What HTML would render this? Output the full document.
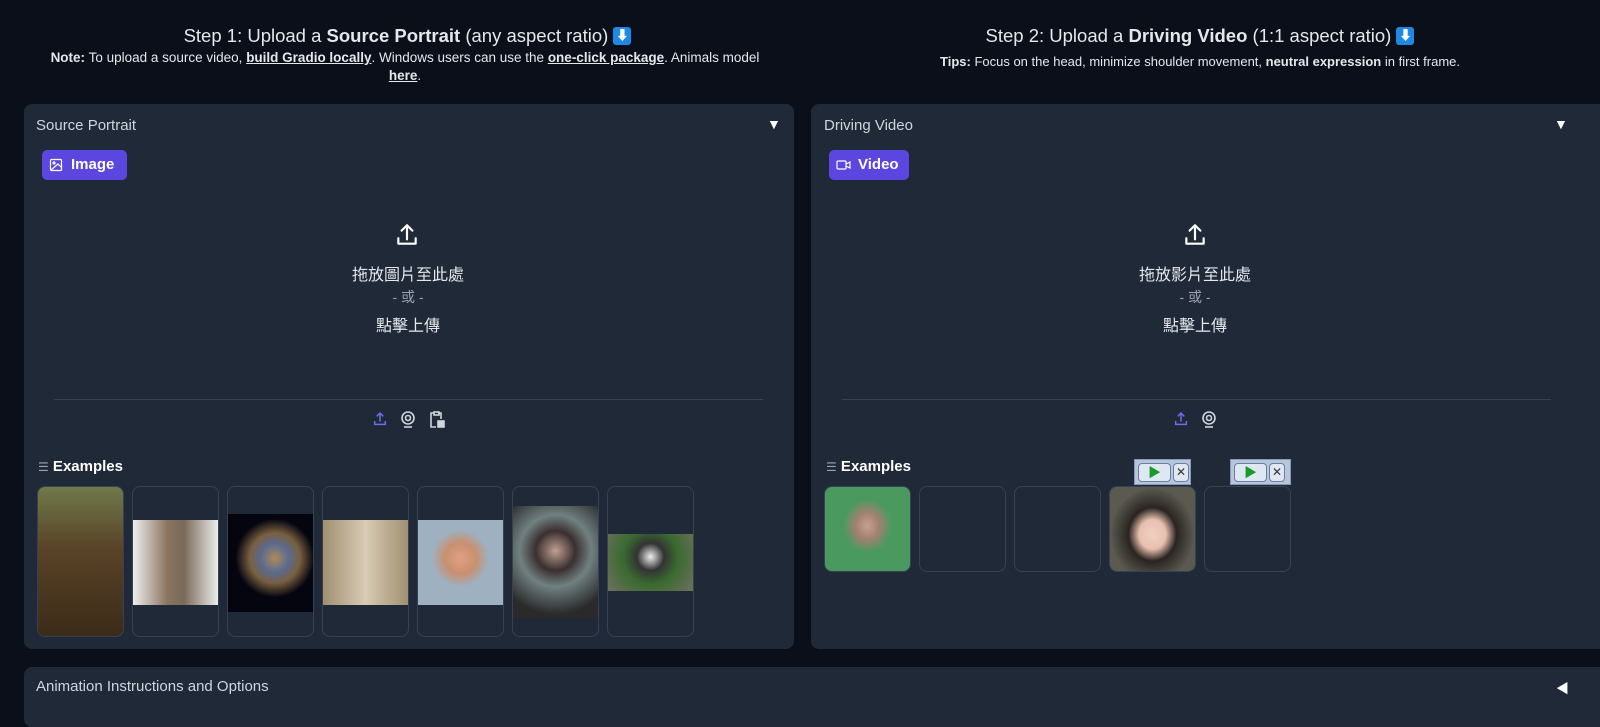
<!DOCTYPE html><html><head><meta charset="utf-8"><style>
*{box-sizing:border-box;margin:0;padding:0}
body{width:1600px;height:712px;background:#0b0f19;color:#e5e7eb;font-family:"Liberation Sans","Noto Sans CJK TC",sans-serif;position:relative;overflow:hidden}
.a{position:absolute}
.t{text-align:center;color:#e5e7eb}
.panel{position:absolute;background:#1f2937;border-radius:8px}
.lbl{position:absolute;font-size:15px;color:#d1d5db}
.tab{position:absolute;background:#5b47e0;border-radius:5px;color:#fff;font-weight:bold;font-size:15px;height:30px;line-height:30px;padding-left:29px}
.cell{position:absolute;border:1px solid #374151;border-radius:8px;overflow:hidden;width:87px}
.cell div{position:absolute;left:0;width:100%}
.cn{font-size:16px;color:#e5e7eb;text-align:center;width:200px}
.pb{position:absolute;background:#b8c6dc;border:1px solid #8899b8;height:26px}
.pb span{position:absolute;top:3px;height:19px;border:1px solid #6a7ea0;border-radius:4px;background:#dfe7f3}
</style></head><body>
<div class="a t" style="left:0;top:25px;width:815px;font-size:18.5px">Step 1: Upload a <b>Source Portrait</b> (any aspect ratio) <span style="display:inline-block;width:18px;height:18px;background:#1e88e5;border-radius:3px;color:#fff;font-size:13px;line-height:18px;vertical-align:2px">⬇</span></div>
<div class="a t" style="left:40px;top:49px;width:730px;font-size:13.5px;line-height:18px"><b>Note:</b> To upload a source video, <b><u>build Gradio locally</u></b>. Windows users can use the <b><u>one-click package</u></b>. Animals model <b><u>here</u></b>.</div>
<div class="a t" style="left:800px;top:25px;width:800px;font-size:18.5px">Step 2: Upload a <b>Driving Video</b> (1:1 aspect ratio) <span style="display:inline-block;width:18px;height:18px;background:#1e88e5;border-radius:3px;color:#fff;font-size:13px;line-height:18px;vertical-align:2px">⬇</span></div>
<div class="a t" style="left:800px;top:54px;width:800px;font-size:13px"><b>Tips:</b> Focus on the head, minimize shoulder movement, <b>neutral expression</b> in first frame.</div>

<div class="panel" style="left:24px;top:104px;width:770px;height:545px"></div>
<div class="panel" style="left:811px;top:104px;width:800px;height:545px"></div>
<div class="panel" style="left:24px;top:667px;width:1590px;height:60px"></div>

<div class="lbl" style="left:36px;top:117px">Source Portrait</div>
<div class="a" style="left:767px;top:116px;font-size:14px;color:#fff">▼</div>
<div class="lbl" style="left:824px;top:117px">Driving Video</div>
<div class="a" style="left:1554px;top:116px;font-size:14px;color:#fff">▼</div>
<div class="lbl" style="left:36px;top:678px">Animation Instructions and Options</div>
<div class="a" style="left:1556px;top:678px;font-size:13px;color:#fff">◀</div>

<div class="tab" style="left:42px;top:150px;width:85px">Image</div>
<svg class="a" style="left:49px;top:158px" width="14" height="14" viewBox="0 0 14 14" fill="none" stroke="#fff" stroke-width="1.2"><rect x="1.5" y="1.5" width="11" height="11" rx="1"/><circle cx="5" cy="5" r="1"/><path d="M12 9 9 6 2 12"/></svg>
<div class="tab" style="left:829px;top:150px;width:80px">Video</div>
<svg class="a" style="left:836px;top:159px" width="15" height="12" viewBox="0 0 15 12" fill="none" stroke="#fff" stroke-width="1.2"><rect x="1" y="2" width="9" height="8" rx="1"/><path d="M10 5l4-2v6l-4-2"/></svg>

<svg class="a" style="left:394px;top:222px" width="26" height="26" viewBox="0 0 24 24" fill="none" stroke="#fff" stroke-width="2" stroke-linecap="round" stroke-linejoin="round"><path d="M4 15v5h16v-5M12 16V3M7 8l5-5 5 5"/></svg>
<svg class="a" style="left:1182px;top:222px" width="26" height="26" viewBox="0 0 24 24" fill="none" stroke="#fff" stroke-width="2" stroke-linecap="round" stroke-linejoin="round"><path d="M4 15v5h16v-5M12 16V3M7 8l5-5 5 5"/></svg>
<div class="a cn" style="left:308px;top:261px">拖放圖片至此處</div>
<div class="a cn" style="left:308px;top:287px;font-size:14px;color:#9ca3af">- 或 -</div>
<div class="a cn" style="left:308px;top:312px">點擊上傳</div>
<div class="a cn" style="left:1095px;top:261px">拖放影片至此處</div>
<div class="a cn" style="left:1095px;top:287px;font-size:14px;color:#9ca3af">- 或 -</div>
<div class="a cn" style="left:1095px;top:312px">點擊上傳</div>

<div class="a" style="left:54px;top:399px;width:709px;height:1px;background:#374151"></div>
<div class="a" style="left:842px;top:399px;width:709px;height:1px;background:#374151"></div>
<svg class="a" style="left:372px;top:411px" width="16" height="16" viewBox="0 0 24 24" fill="none" stroke="#6d6ff0" stroke-width="2.2"><path d="M4 15v5h16v-5M12 16V3M7 8l5-5 5 5"/></svg>
<svg class="a" style="left:400px;top:411px" width="16" height="17" viewBox="0 0 16 17" fill="none" stroke="#d1d5db" stroke-width="1.6"><circle cx="8" cy="7" r="6"/><circle cx="8" cy="7" r="2.5"/><path d="M4 16h8"/></svg>
<svg class="a" style="left:429px;top:411px" width="16" height="17" viewBox="0 0 16 17" fill="none" stroke="#d1d5db" stroke-width="1.6"><path d="M5 2H2v14h5M9 2h3v6"/><rect x="5" y="1" width="5" height="3"/><rect x="9" y="10" width="6" height="6" fill="#d1d5db"/></svg>
<svg class="a" style="left:1173px;top:411px" width="16" height="16" viewBox="0 0 24 24" fill="none" stroke="#6d6ff0" stroke-width="2.2"><path d="M4 15v5h16v-5M12 16V3M7 8l5-5 5 5"/></svg>
<svg class="a" style="left:1201px;top:411px" width="16" height="17" viewBox="0 0 16 17" fill="none" stroke="#d1d5db" stroke-width="1.6"><circle cx="8" cy="7" r="6"/><circle cx="8" cy="7" r="2.5"/><path d="M4 16h8"/></svg>

<div class="a" style="left:38px;top:458px;font-size:15px;font-weight:bold;color:#fff"><span style="font-size:12px;font-weight:normal;color:#9ca3af">☰</span> Examples</div>
<div class="a" style="left:826px;top:458px;font-size:15px;font-weight:bold;color:#fff"><span style="font-size:12px;font-weight:normal;color:#9ca3af">☰</span> Examples</div>

<div class="cell" style="left:37px;top:486px;height:151px"><div style="top:0;height:151px;background:linear-gradient(#6f7a4a,#5a4428 40%,#3a2a18)"></div></div>
<div class="cell" style="left:132px;top:486px;height:151px"><div style="top:33px;height:85px;background:linear-gradient(90deg,#eee,#8a7560 40%,#7a6a5a 60%,#eee)"></div></div>
<div class="cell" style="left:227px;top:486px;height:151px"><div style="top:27px;height:98px;background:radial-gradient(circle at 55% 45%,#b08a5a 0,#5a6a90 20%,#7a6040 35%,#050510 55%)"></div></div>
<div class="cell" style="left:322px;top:486px;height:151px"><div style="top:33px;height:85px;background:linear-gradient(90deg,#a09070,#d8cbb5 50%,#a09070)"></div></div>
<div class="cell" style="left:417px;top:486px;height:151px"><div style="top:33px;height:85px;background:radial-gradient(circle at 50% 45%,#e0a080 0,#c89070 25%,#9fb0c0 45%)"></div></div>
<div class="cell" style="left:512px;top:486px;height:151px"><div style="top:19px;height:112px;background:radial-gradient(circle at 50% 40%,#c0a090 0,#3a3030 25%,#708080 45%,#2a2a2a 80%)"></div></div>
<div class="cell" style="left:607px;top:486px;height:151px"><div style="top:47px;height:57px;background:radial-gradient(circle at 50% 40%,#eee 0,#333 25%,#3a6a30 50%,#707060)"></div></div>

<div class="cell" style="left:824px;top:486px;height:86px"><div style="top:0;height:86px;background:radial-gradient(ellipse at 50% 45%,#c8a090 0,#a08070 20%,#4a9a60 40%)"></div></div>
<div class="cell" style="left:919px;top:486px;height:86px"></div>
<div class="cell" style="left:1014px;top:486px;height:86px"></div>
<div class="cell" style="left:1109px;top:486px;height:86px"><div style="top:0;height:86px;background:radial-gradient(ellipse at 50% 55%,#f0d0c0 0,#e8c0b0 22%,#2a2420 40%,#5a5a50 70%)"></div></div>
<div class="cell" style="left:1204px;top:486px;height:86px"></div>
<div class="pb" style="left:1134px;top:459px;width:57px"><span style="left:3px;width:33px;color:#1a9a2a;font-size:13px;line-height:17px;text-align:center">▶</span><span style="left:38px;width:16px;font-size:12px;line-height:17px;text-align:center;color:#333">✕</span></div>
<div class="pb" style="left:1230px;top:459px;width:61px"><span style="left:3px;width:33px;color:#1a9a2a;font-size:13px;line-height:17px;text-align:center">▶</span><span style="left:38px;width:16px;font-size:12px;line-height:17px;text-align:center;color:#333">✕</span></div>
</body></html>
